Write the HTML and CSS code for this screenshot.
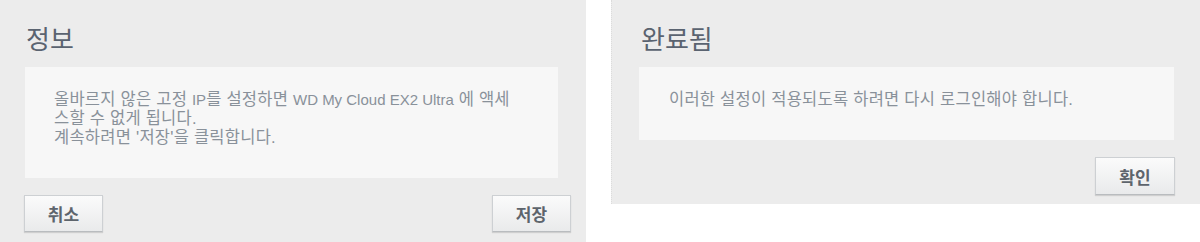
FILE: index.html
```html
<!DOCTYPE html>
<html lang="ko">
<head>
<meta charset="utf-8">
<title>Dialogs</title>
<link rel="stylesheet" href="styles.css">
</head>
<body>
<div class="stage">
  <section class="dialog dialog-left">
    <h1 class="title">정보</h1>
    <div class="message">
      <p>올바르지 않은 고정 <span class="en">IP</span>를 설정하면 <span class="en">WD My Cloud EX2 Ultra</span> 에 액세<br>스할 수 없게 됩니다.<br>계속하려면 '저장'을 클릭합니다.</p>
    </div>
    <div class="actions actions-split">
      <button class="btn">취소</button>
      <button class="btn">저장</button>
    </div>
  </section>
  <section class="dialog dialog-right">
    <h1 class="title">완료됨</h1>
    <div class="message">
      <p>이러한 설정이 적용되도록 하려면 다시 로그인해야 합니다.</p>
    </div>
    <div class="actions actions-end">
      <button class="btn">확인</button>
    </div>
  </section>
</div>
</body>
</html>
```

FILE: styles.css
```css
html, body {
  margin: 0;
  padding: 0;
  background: #ffffff;
  overflow: hidden;
}

body {
  width: 1200px;
  height: 242px;
  font-family: "Noto Sans CJK KR", "Liberation Sans", sans-serif;
}

.stage {
  display: flex;
  align-items: flex-start;
  gap: 25px;
  width: 1200px;
  height: 242px;
}

.dialog {
  background: #ececec;
  box-sizing: border-box;
  flex: none;
}

.dialog-left {
  width: 586px;
  height: 250px;
  padding: 23px 28px 0 25px;
}

.dialog-right {
  width: 600px;
  height: 204px;
  padding: 23px 0 0 27px;
  border-left: 1px dotted #dcdcdc;
}

.title {
  margin: 0 0 14px 1px;
  font-family: "Noto Sans CJK KR", sans-serif;
  font-weight: 400;
  font-size: 26px;
  line-height: 30px;
  color: #5a6370;
}

.dialog-right .title {
  margin-left: 2px;
}

.message {
  background: #f7f7f7;
  padding: 23px 30px 31px 29px;
}

.dialog-right .message {
  width: 535px;
  box-sizing: border-box;
  padding-left: 30px;
}

.message p {
  margin: 0;
  font-family: "Liberation Sans", "Noto Sans CJK KR", sans-serif;
  font-size: 16.5px;
  letter-spacing: 0.25px;
  line-height: 19px;
  color: #89919a;
  white-space: nowrap;
}

.message .en {
  font-size: 15px;
  letter-spacing: 0;
}

.actions {
  display: flex;
  margin-top: 17px;
}

.actions-split {
  justify-content: space-between;
  margin-left: -1px;
  margin-right: -13px;
}

.actions-end {
  justify-content: flex-end;
  width: 536px;
}

.btn {
  width: 80px;
  height: 38px;
  box-sizing: border-box;
  border: 1px solid #cdd0d3;
  border-bottom-color: #b9bcbf;
  background: linear-gradient(#fbfbfb, #e9eaeb);
  box-shadow: 0 1px 1px rgba(0, 0, 0, 0.12);
  font-family: "Noto Sans CJK KR", sans-serif;
  font-weight: 700;
  font-size: 17px;
  color: #5d646c;
  padding: 0;
  cursor: pointer;
}

.actions-split .btn {
  width: 79px;
  height: 37px;
}
```
